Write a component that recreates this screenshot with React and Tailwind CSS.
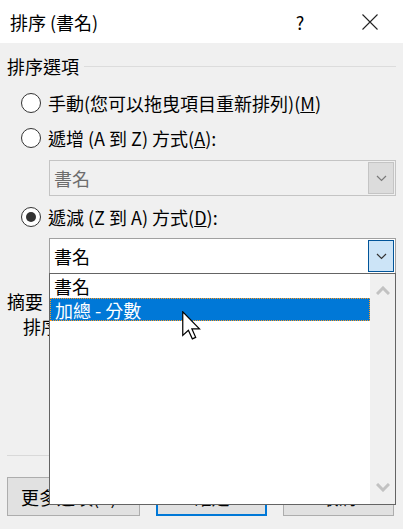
const Chevron = ({ className }) => (
  <svg width="11" height="7" viewBox="0 0 11 7" className={className}>
    <path d="M1 1 L5.5 5.5 L10 1" fill="none" stroke="currentColor" strokeWidth="1.2" />
  </svg>
);

const ThickChevron = ({ up }) => (
  <svg width="14" height="9" viewBox="0 0 14 9" className="text-[#c2c2c2]">
    <path
      d={up ? "M1 8 L7 2 L13 8" : "M1 1 L7 7 L13 1"}
      fill="none"
      stroke="currentColor"
      strokeWidth="3"
    />
  </svg>
);

function Radio({ checked, children }) {
  return (
    <div className="flex items-center h-[24px] pl-[14px]">
      <div className="w-[20px] h-[20px] rounded-full border-[1.5px] border-[#333] bg-white flex items-center justify-center">
        {checked && <div className="w-[10px] h-[10px] rounded-full bg-[#333]" />}
      </div>
      <span className="ml-[7px]">{children}</span>
    </div>
  );
}

export default function App() {
  return (
    <div className="relative w-[403px] h-[529px] overflow-hidden bg-[#f0f0f0] text-[18px] leading-[24px] text-black font-['Noto_Sans_CJK_TC','Liberation_Sans',sans-serif]">
      {/* title bar */}
      <div className="h-[43px] bg-white flex items-center pl-[10px]">
        <span>排序 (書名)</span>
        <div className="ml-auto flex items-center pr-[10px]">
          <span className="w-[30px] text-center">?</span>
          <div className="ml-[32px] w-[46px] flex justify-center">
            <svg width="16" height="16" viewBox="0 0 16 16">
              <path d="M0.5 0.5 L15.5 15.5 M15.5 0.5 L0.5 15.5" stroke="#222" strokeWidth="1.1" />
            </svg>
          </div>
        </div>
      </div>

      <div className="px-[7px]">
        {/* group label */}
        <div className="mt-[11px] flex items-center">
          <span>排序選項</span>
          <div className="flex-1 h-px bg-[#dcdcdc] ml-[5px]" />
        </div>

        <div className="mt-[13px]">
          <Radio>
            手動(您可以拖曳項目重新排列)(<span className="underline">M</span>)
          </Radio>
        </div>
        <div className="mt-[11px]">
          <Radio>
            遞增 (A 到 Z) 方式(<span className="underline">A</span>):
          </Radio>
        </div>

        {/* disabled combo */}
        <div className="mt-[10px] ml-[42px] h-[36px] border border-[#c4c4c4] bg-[#f0f0f0] flex items-center">
          <span className="pl-[4px] text-[#6d6d6d]">書名</span>
          <div className="ml-auto mr-px w-[26px] h-[32px] bg-[#dcdcdc] border border-[#c4c4c4] flex items-center justify-center text-[#7a7a7a]">
            <Chevron />
          </div>
        </div>

        <div className="mt-[9px]">
          <Radio checked>
            遞減 (Z 到 A) 方式(<span className="underline">D</span>):
          </Radio>
        </div>

        {/* active combo */}
        <div className="mt-[9px] ml-[42px] h-[36px] border border-[#a0a0a0] bg-white flex items-center">
          <span className="pl-[4px]">書名</span>
          <div className="ml-auto mr-px w-[26px] h-[32px] bg-[#cce4f7] border-[1.5px] border-[#005499] flex items-center justify-center text-[#333]">
            <Chevron />
          </div>
        </div>

        <div className="mt-[15px]">摘要</div>
        <div className="mt-px pl-[16px]">排序依據 書名 遞減</div>

        <div className="mt-[117px] h-px bg-[#d9d9d9]" />

        <div className="mt-[21px] flex gap-[16px]">
          <div className="w-[133px] h-[39px] bg-[#e1e1e1] border border-[#adadad] flex items-center pl-[13px]">
            更多選項(R)...
          </div>
          <div className="w-[111px] h-[39px] bg-[#e1e1e1] border-2 border-[#0078d7] flex items-center justify-center">
            確定
          </div>
          <div className="w-[111px] h-[39px] bg-[#e1e1e1] border border-[#adadad] flex items-center justify-center">
            取消
          </div>
        </div>
      </div>

      {/* open dropdown list */}
      <div className="absolute left-[49px] top-[273px] w-[347px] h-[232px] border border-[#646464] bg-white flex">
        <div className="flex-1">
          <div className="h-[24px] pl-[4px] flex items-center">書名</div>
          <div className="h-[23px] pl-[4px] flex items-center bg-[#0078d7] text-white border border-dotted border-[#ff9a1f]">
            加總 - 分數
          </div>
        </div>
        <div className="w-[25px] bg-[#f0f0f0] flex flex-col items-center justify-between py-[12px]">
          <ThickChevron up />
          <ThickChevron />
        </div>
      </div>

      {/* mouse cursor */}
      <svg
        className="absolute left-[182px] top-[311px]"
        width="19"
        height="29"
        viewBox="0 0 12.5 19"
      >
        <path
          d="M0.5 0.5 L0.5 16 L4.2 12.6 L6.8 18.3 L9 17.3 L6.5 11.7 L11.5 11.7 Z"
          fill="white"
          stroke="black"
          strokeWidth="0.8"
          strokeLinejoin="miter"
        />
      </svg>
    </div>
  );
}
